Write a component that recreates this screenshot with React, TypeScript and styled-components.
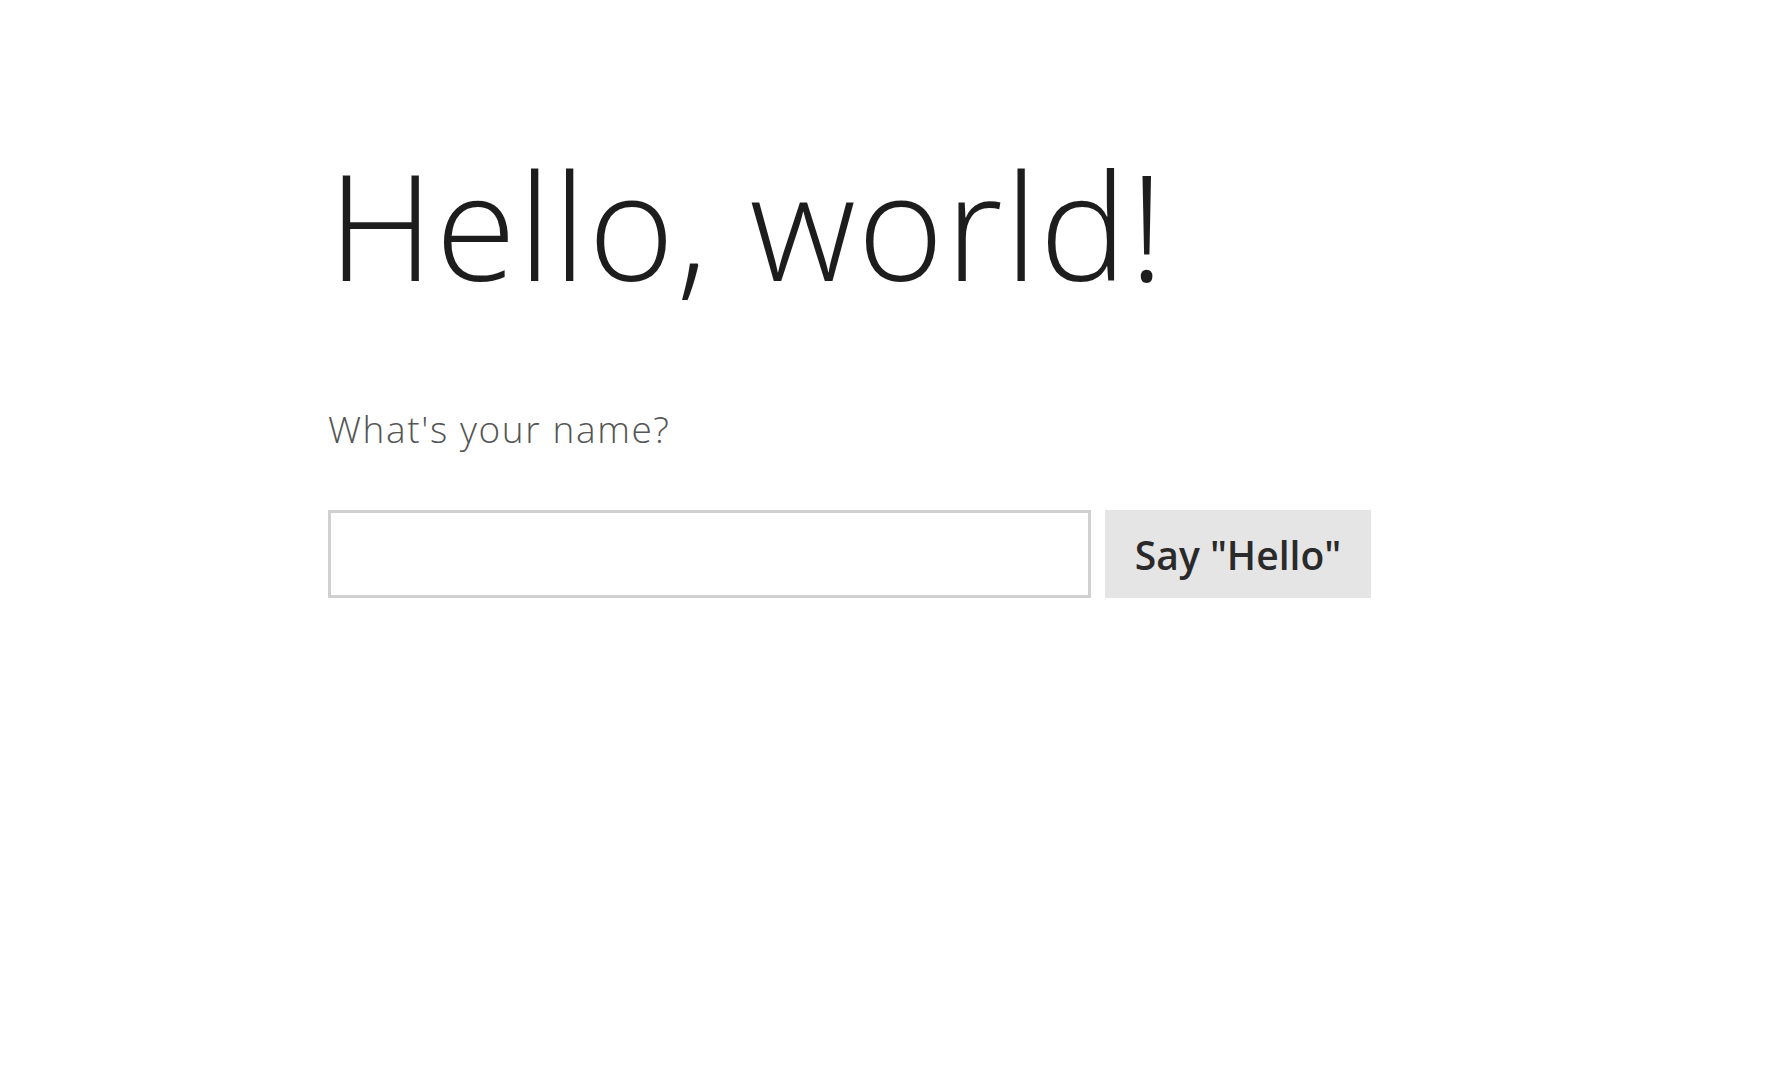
import React from "react";
import styled, { createGlobalStyle } from "styled-components";

const Global = createGlobalStyle`
  html, body { margin: 0; padding: 0; background: #ffffff; }
  body { font-family: "Open Sans", "Noto Sans", sans-serif; }
`;

const Page = styled.main`
  width: 1782px;
  height: 1080px;
  box-sizing: border-box;
  padding: 124px 0 0 328px;
  display: flex;
  flex-direction: column;
  align-items: flex-start;
`;

const Title = styled.h1`
  margin: 0;
  font-family: "Open Sans", sans-serif;
  font-weight: 300;
  font-size: 147px;
  line-height: 200px;
  color: #1d1d1d;
  letter-spacing: 1.8px;
`;

const Label = styled.p`
  margin: 85px 0 0 0;
  font-family: "Open Sans", sans-serif;
  font-weight: 300;
  font-size: 37px;
  line-height: 40px;
  color: #555555;
  letter-spacing: 1.6px;
`;

const Row = styled.div`
  margin-top: 61px;
  display: flex;
  gap: 14px;
`;

const NameInput = styled.input`
  width: 763px;
  height: 88px;
  box-sizing: border-box;
  border: 3px solid #d0d0d0;
  background: #ffffff;
  font-family: "Open Sans", sans-serif;
  font-size: 30px;
  padding: 0 12px;
  outline: none;
`;

const Button = styled.button`
  width: 266px;
  height: 88px;
  border: none;
  background: #e5e5e5;
  font-family: "Open Sans", sans-serif;
  font-weight: 600;
  font-size: 39px;
  color: #2a2a2a;
  padding: 0;
  cursor: pointer;
`;

export default function App() {
  return (
    <>
      <Global />
      <Page>
        <Title>Hello, world!</Title>
        <Label>What's your name?</Label>
        <Row>
          <NameInput type="text" />
          <Button>Say "Hello"</Button>
        </Row>
      </Page>
    </>
  );
}
